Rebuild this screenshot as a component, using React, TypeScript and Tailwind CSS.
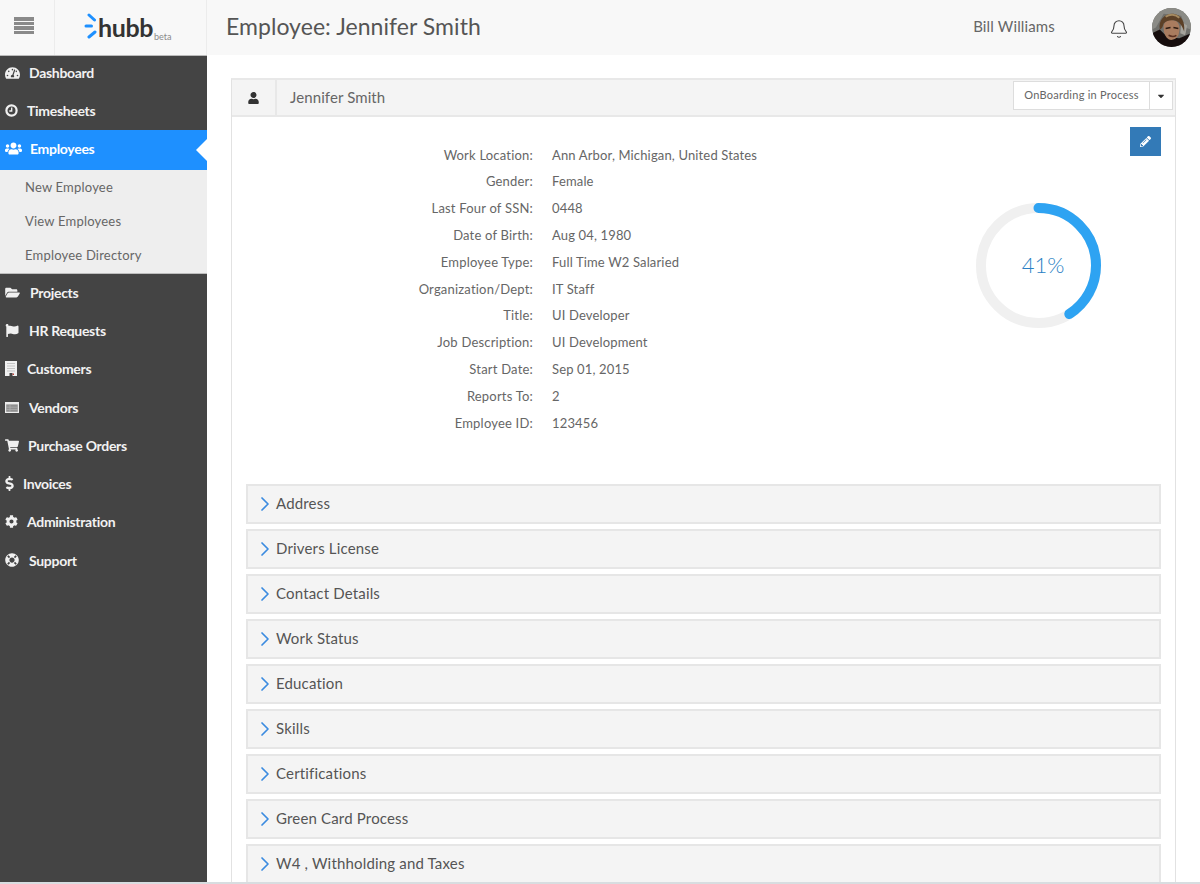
import { ChevronRight, Bell } from "lucide-react";
import {
  FaTachometerAlt, FaUsers, FaFolderOpen, FaFlag, FaShoppingCart, FaDollarSign,
  FaCog, FaLifeRing, FaUser, FaPencilAlt, FaCaretDown,
} from "react-icons/fa";

function ClockIcon({ className }: { className?: string }) {
  return (
    <svg viewBox="0 0 14 14" className={className}>
      <circle cx="7" cy="7" r="5.5" fill="none" stroke="currentColor" strokeWidth="2.4" />
      <path d="M7.2 3.8V7.6H4.6" fill="none" stroke="currentColor" strokeWidth="1.5" />
    </svg>
  );
}
function BuildingIcon({ className }: { className?: string }) {
  return (
    <svg viewBox="0 0 12 15" className={className}>
      <rect width="12" height="15" fill="#f0f0f0" />
      <path d="M2 2.5H10M2 5H10M2 7.5H10M2 10H10" stroke="#c4c4c4" strokeWidth="1.1" />
      <rect x="4.5" y="12" width="3" height="3" fill="#444" />
      <rect x="7.5" y="12.5" width="1.5" height="1.5" fill="#b5413a" />
    </svg>
  );
}
function TableIcon({ className }: { className?: string }) {
  return (
    <svg viewBox="0 0 14 11" className={className}>
      <rect width="14" height="11" fill="#ececec" />
      <rect x="1.2" y="2.4" width="11.6" height="7.4" fill="#8f8f8f" />
      <path d="M1.2 5.2H12.8M1.2 7.6H12.8" stroke="#b0b0b0" strokeWidth="0.8" />
      <path d="M5 2.4V9.8" stroke="#b0b0b0" strokeWidth="0.8" />
    </svg>
  );
}

const topItems = [
  { label: "Dashboard", Icon: FaTachometerAlt, icon: "w-[15px] h-[14px]", text: "ml-[9px]", row: "h-[36px] pb-[3px]" },
  { label: "Timesheets", Icon: ClockIcon, icon: "w-[13px] h-[13px]", text: "ml-[9px]", row: "h-[38px] pb-[2px]" },
];
const bottomItems = [
  { label: "Projects", Icon: FaFolderOpen, icon: "w-[15px] h-[13px]", text: "ml-[10px]" },
  { label: "HR Requests", Icon: FaFlag, icon: "w-[14px] h-[13px]", text: "ml-[10px]" },
  { label: "Customers", Icon: BuildingIcon, icon: "w-[12px] h-[15px]", text: "ml-[10px]" },
  { label: "Vendors", Icon: TableIcon, icon: "w-[14px] h-[11px]", text: "ml-[10px]" },
  { label: "Purchase Orders", Icon: FaShoppingCart, icon: "w-[14px] h-[13px]", text: "ml-[9px]" },
  { label: "Invoices", Icon: FaDollarSign, icon: "w-[9px] h-[15px]", text: "ml-[9px]" },
  { label: "Administration", Icon: FaCog, icon: "w-[13px] h-[13px]", text: "ml-[9px]" },
  { label: "Support", Icon: FaLifeRing, icon: "w-[14px] h-[14px]", text: "ml-[10px]" },
];
const subItems = ["New Employee", "View Employees", "Employee Directory"];
const details = [
  ["Work Location:", "Ann Arbor, Michigan, United States"],
  ["Gender:", "Female"],
  ["Last Four of SSN:", "0448"],
  ["Date of Birth:", "Aug 04, 1980"],
  ["Employee Type:", "Full Time W2 Salaried"],
  ["Organization/Dept:", "IT Staff"],
  ["Title:", "UI Developer"],
  ["Job Description:", "UI Development"],
  ["Start Date:", "Sep 01, 2015"],
  ["Reports To:", "2"],
  ["Employee ID:", "123456"],
];
const sections = [
  "Address", "Drivers License", "Contact Details", "Work Status", "Education",
  "Skills", "Certifications", "Green Card Process", "W4 , Withholding and Taxes",
];

function Logo() {
  return (
    <div className="flex items-start w-[88px] h-[30px]">
      <svg viewBox="0 0 14 26" className="w-[14px] h-[26px] shrink-0">
        <g stroke="#1e90ff" strokeWidth="3" strokeLinecap="round" fill="none">
          <path d="M5 2 L10.5 7" />
          <path d="M2 13 L7.5 13" />
          <path d="M5 24 L11 19" />
        </g>
      </svg>
      <span className="text-[25px] leading-[24px] mt-[2px] font-bold tracking-[-0.4px] text-[#333]">hubb</span>
      <span className="text-[9px] leading-[9px] text-[#8a8a8a] mt-[19px] ml-[1px]">beta</span>
    </div>
  );
}

function Avatar() {
  return (
    <svg viewBox="0 0 40 40" className="w-[39px] h-[39px] rounded-full">
      <defs>
        <filter id="soft"><feGaussianBlur stdDeviation="0.8" /></filter>
      </defs>
      <rect width="40" height="40" fill="#6f6f6b" />
      <g filter="url(#soft)">
        <path d="M0 0H40V22L34 20 30 8 12 6 4 20 0 22Z" fill="#8b8b86" />
        <path d="M30 14L36 18 34 28 29 26Z" fill="#a5a39c" />
        <path d="M0 40V26L8 22 16 30 28 31 40 26V40Z" fill="#15110f" />
        <path d="M12 21C11 13 18 11 24 13C29 15 29 23 27 28C25 32 20 34 17 32C14 30 12 26 12 21Z" fill="#a97c5f" />
        <path d="M8 22C6 12 14 5 22 6C30 7 34 14 33 24C31 18 28 14 24 13C19 12 15 13 12 16C11 19 10 22 8 22Z" fill="#5c4028" />
        <path d="M14 9C18 6 24 6 28 10" stroke="#a58a60" strokeWidth="2" fill="none" />
        <path d="M14 21L19 20M22 20L27 21" stroke="#2e1c12" strokeWidth="1.6" />
        <path d="M17 28C20 29.5 23 29.5 25 28" stroke="#5a3020" strokeWidth="1.6" fill="none" />
      </g>
    </svg>
  );
}

function Donut() {
  return (
    <div className="relative w-[125px] h-[125px]">
      <svg viewBox="0 0 125 125" className="w-[125px] h-[125px] -rotate-90">
        <circle cx="62.5" cy="62.5" r="57.5" fill="none" stroke="#f0f0f0" strokeWidth="10" />
        <circle cx="62.5" cy="62.5" r="57.5" fill="none" stroke="#2ea3f2" strokeWidth="10" strokeLinecap="round" pathLength={100} strokeDasharray="41 100" />
      </svg>
      <div className="absolute inset-0 flex items-center justify-center pl-[9px] pb-[2px] text-[22px] font-light text-[#2a7fc4]">41%</div>
    </div>
  );
}

function NavRow({ item, rowClass }: { item: any; rowClass: string }) {
  const { Icon } = item;
  return (
    <div className={`flex items-center pl-[5px] text-[#f2f2f2] text-[14px] font-bold ${rowClass}`}>
      <Icon className={`${item.icon} shrink-0 text-[#f0f0f0]`} />
      <span className={`${item.text} tracking-[-0.3px]`}>{item.label}</span>
    </div>
  );
}

export default function App() {
  return (
    <div className="h-[884px] w-[1200px] overflow-hidden flex flex-col bg-white font-['Lato','Liberation_Sans',sans-serif]">
      <header className="h-[55px] shrink-0 flex bg-[#f8f8f8]">
        <div className="w-[55px] flex items-center justify-center border-r border-[#ececec]">
          <div className="flex flex-col gap-[1px] w-[20px] -mt-[4px] -ml-[6px]">
            <div className="h-[3.5px] bg-[#8a8a8a]" />
            <div className="h-[3.5px] bg-[#8a8a8a]" />
            <div className="h-[3.5px] bg-[#8a8a8a]" />
            <div className="h-[3.5px] bg-[#8a8a8a]" />
          </div>
        </div>
        <div className="w-[152px] flex items-center pl-[29px] border-r border-[#ececec]">
          <Logo />
        </div>
        <h1 className="ml-[19px] self-center text-[23px] font-normal tracking-[0.05px] text-[#555] -mt-[2px]">Employee: Jennifer Smith</h1>
        <div className="ml-auto flex items-center pr-[9px]">
          <span className="text-[15px] tracking-[0.15px] text-[#666] mr-[54px] -mt-[3px]">Bill Williams</span>
          <Bell className="w-[20px] h-[20px] text-[#444] mr-[23px] mt-[3px]" strokeWidth={1.3} />
          <Avatar />
        </div>
      </header>

      <div className="flex-1 min-h-0 flex">
        <aside className="w-[207px] shrink-0 bg-[#444444] border-t border-[#bbb] flex flex-col">
          {topItems.map((it) => (
            <NavRow key={it.label} item={it} rowClass={it.row} />
          ))}
          <div className="relative h-[40px] bg-[#1e90ff] flex items-center pl-[5px] pb-[3px] text-white text-[14px] font-bold">
            <FaUsers className="w-[17px] h-[15px] shrink-0" />
            <span className="ml-[8px] tracking-[-0.3px]">Employees</span>
            <div className="absolute right-0 top-[9px] w-0 h-0 border-y-[11px] border-y-transparent border-r-[11px] border-r-white" />
          </div>
          <div className="h-[104px] bg-[#eeeeee] border-b border-[#bdbdbd] flex flex-col pt-[1px]">
            {subItems.map((s) => (
              <div key={s} className="h-[34.6px] flex items-center pl-[25px] text-[13px] tracking-[0.2px] text-[#666]">{s}</div>
            ))}
          </div>
          {bottomItems.map((it) => (
            <NavRow key={it.label} item={it} rowClass="h-[38.3px] pb-[2px]" />
          ))}
        </aside>

        <main className="flex-1 min-w-0 overflow-hidden pt-[23px] pl-[24px] pr-[24px]">
          <div className="border-x border-x-[#e2e2e2] border-t-2 border-t-[#e8e8e8] h-[900px] bg-white">
            <div className="h-[37px] bg-[#f4f4f4] border-b-2 border-[#e8e8e8] flex items-center">
              <div className="w-[45px] h-full flex items-center justify-center border-r-2 border-[#e8e8e8]">
                <FaUser className="w-[11px] h-[12px] text-[#333]" />
              </div>
              <span className="ml-[13px] text-[15px] tracking-[0.1px] text-[#666]">Jennifer Smith</span>
              <div className="ml-auto mr-[2px] mb-[4px] flex h-[29px] bg-white border border-[#dddddd] text-[11px] text-[#666]">
                <div className="w-[135px] flex items-center justify-center tracking-[0.25px]">OnBoarding in Process</div>
                <div className="w-[23px] flex items-center justify-center border-l border-[#dddddd]">
                  <FaCaretDown className="w-[10px] h-[10px] text-[#333]" />
                </div>
              </div>
            </div>

            <section className="h-[367px] flex pl-[14px] pr-[14px]">
              <div className="pt-[25px] flex flex-col text-[13px] tracking-[0.2px] text-[#666]">
                {details.map(([k, v]) => (
                  <div key={k} className="h-[26.8px] flex items-center">
                    <span className="w-[287px] text-right">{k}</span>
                    <span className="ml-[19px] tracking-[0.15px]">{v}</span>
                  </div>
                ))}
              </div>
              <div className="ml-auto pt-[10px] flex flex-col items-end">
                <button className="w-[31px] h-[29px] bg-[#337ab7] flex items-center justify-center">
                  <FaPencilAlt className="w-[11px] h-[11px] text-white" />
                </button>
                <div className="mt-[47px] mr-[60px]">
                  <Donut />
                </div>
              </div>
            </section>

            <div className="flex flex-col gap-[5px] pl-[14px] pr-[14px]">
              {sections.map((s) => (
                <div key={s} className="h-[40px] shrink-0 flex items-center bg-[#f4f4f4] border-2 border-[#e6e6e6] pl-[5px]">
                  <ChevronRight className="w-[24px] h-[24px] text-[#3b8be0]" strokeWidth={1.7} />
                  <span className="-ml-[1px] pb-[2px] text-[15px] tracking-[0.17px] text-[#555]">{s}</span>
                </div>
              ))}
            </div>
          </div>
        </main>
      </div>
      <div className="h-[2px] shrink-0 bg-[#d8dde0]" />
    </div>
  );
}
